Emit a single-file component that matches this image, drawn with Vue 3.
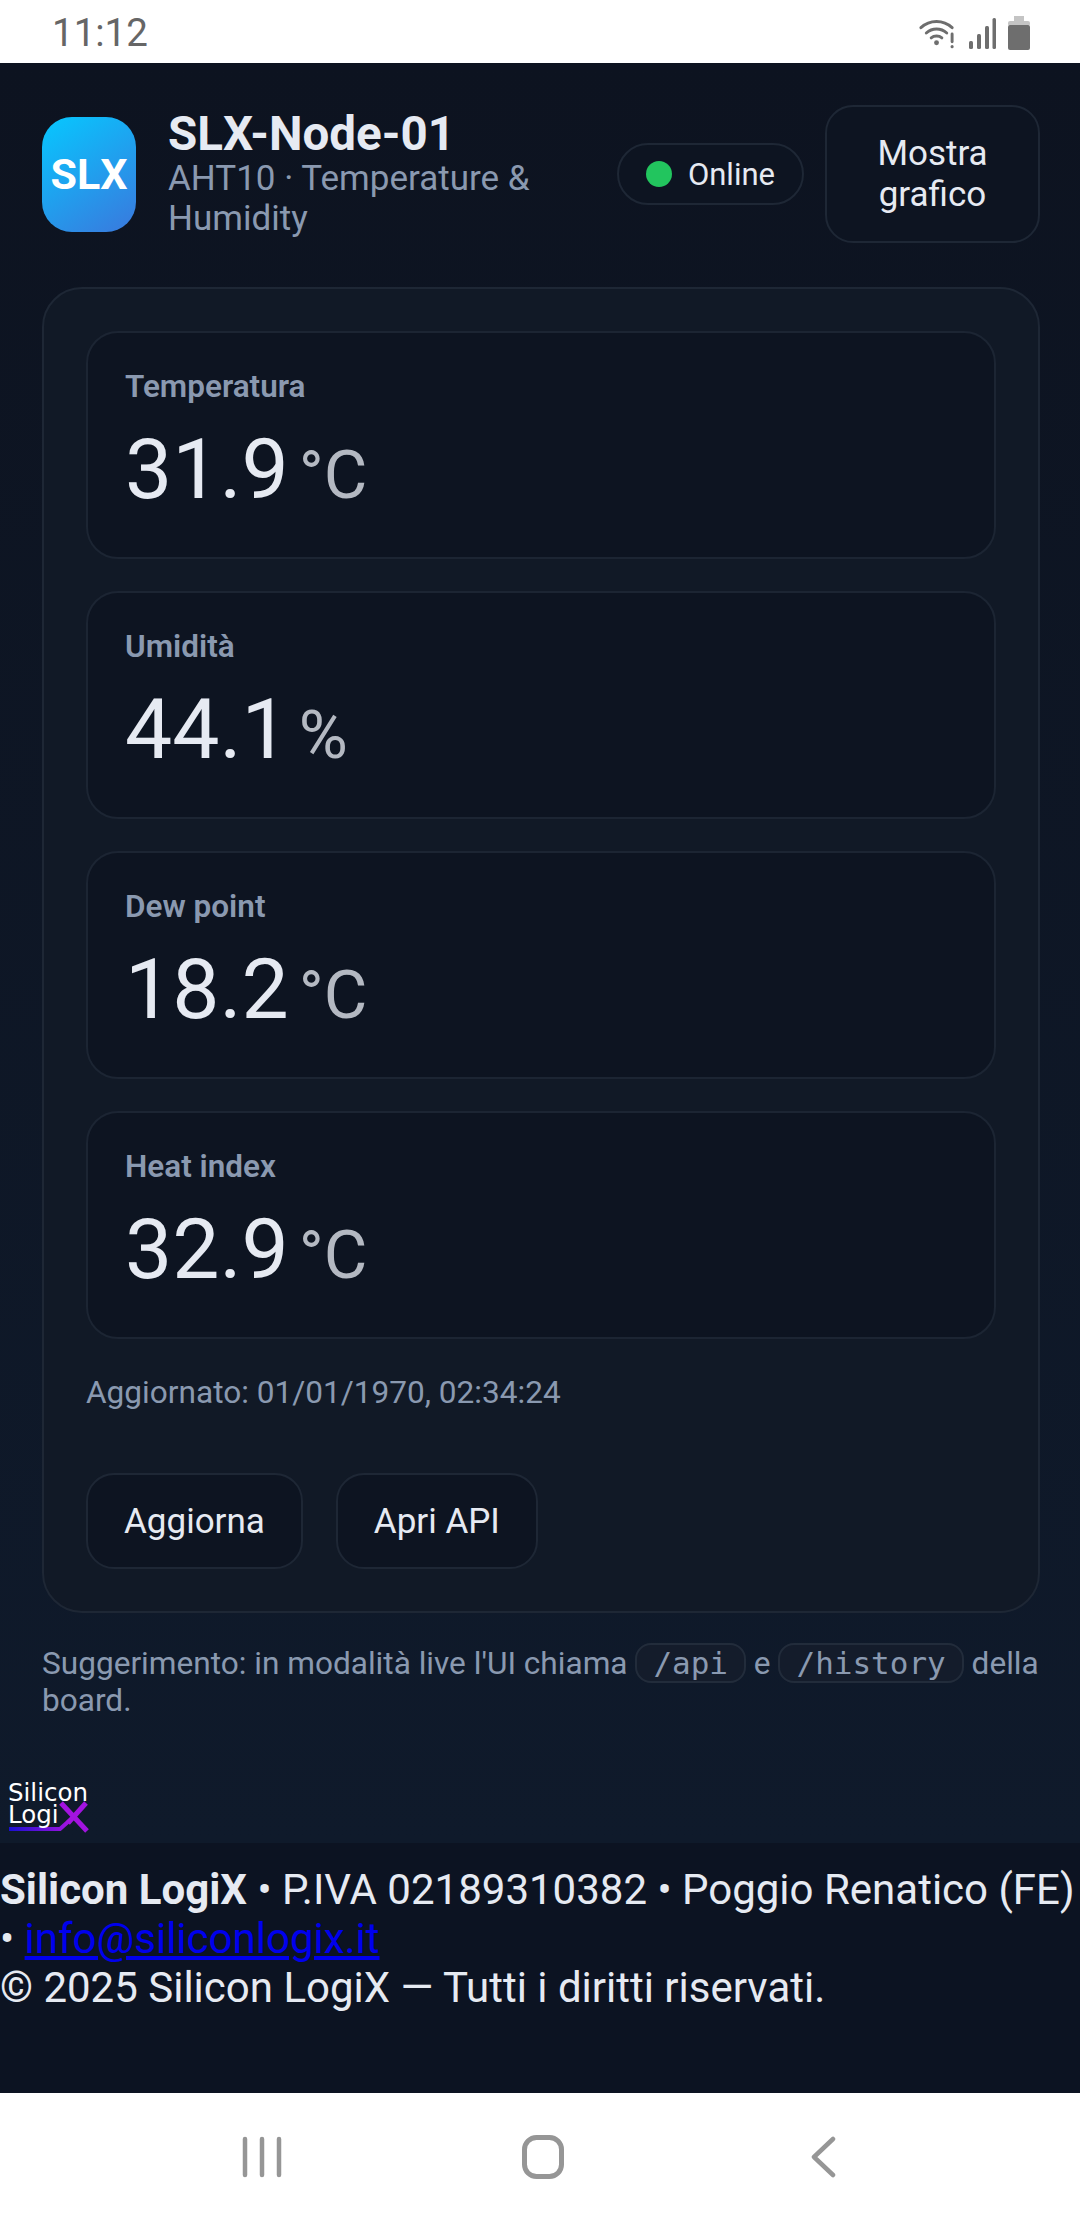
<template>
  <div class="page">
    <div class="status-bar">
      <span class="time">11:12</span>
      <div class="status-icons">
        <svg width="37" height="32" viewBox="0 0 38 32" fill="none" stroke="#6e6e6e" stroke-linecap="round">
          <path d="M2 10.500C11 2 25 2 34 10.500" stroke-width="3" />
          <path d="M7.500 16C13.500 10.500 22.500 10.500 28.500 16" stroke-width="3" />
          <path d="M12.500 21C15.500 18.500 20.500 18.500 23.500 21" stroke-width="3" />
          <circle cx="18" cy="26" r="2.500" fill="#6e6e6e" stroke="none" />
          <path d="M34 17V25" stroke-width="3" />
          <circle cx="34" cy="30" r="1.600" fill="#6e6e6e" stroke="none" />
        </svg>
        <svg width="28" height="32" viewBox="0 0 28 32" fill="#6e6e6e">
          <rect x="1" y="24" width="4" height="8" rx="1.500" />
          <rect x="9" y="17" width="4" height="15" rx="1.500" />
          <rect x="17" y="9" width="4" height="23" rx="1.500" />
          <rect x="24.500" y="1" width="3.500" height="31" rx="1.500" />
        </svg>
        <svg width="22" height="34" viewBox="0 0 22 34">
          <rect x="6" y="0" width="10" height="6" fill="#c4c4c4" />
          <rect x="0" y="5" width="22" height="5" rx="2" fill="#c4c4c4" />
          <rect x="0" y="9" width="22" height="25" rx="2" fill="#6e6e6e" />
        </svg>
      </div>
    </div>

    <main class="main">
      <header class="header">
        <div class="logo">SLX</div>
        <div class="title-block">
          <h1>SLX-Node-01</h1>
          <p>AHT10 · Temperature &amp; Humidity</p>
        </div>
        <div class="pill"><span class="dot"></span>Online</div>
        <button class="btn chart-btn">Mostra grafico</button>
      </header>

      <section class="panel">
        <div class="cards">
          <div v-for="m in metrics" :key="m.label" class="card">
            <div class="label">{{ m.label }}</div>
            <div class="value">{{ m.value }}<span class="unit">{{ m.unit }}</span></div>
          </div>
        </div>
        <div class="updated">Aggiornato: 01/01/1970, 02:34:24</div>
        <div class="actions">
          <button class="btn">Aggiorna</button>
          <button class="btn">Apri API</button>
        </div>
      </section>

      <p class="hint">
        Suggerimento: in modalità live l'UI chiama <code>/api</code> e <code>/history</code> della board.
      </p>

      <svg class="brand" width="82" height="56" viewBox="0 0 82 56">
        <defs>
          <linearGradient id="brandLine" gradientUnits="userSpaceOnUse" x1="1" y1="0" x2="62" y2="0">
            <stop offset="0" stop-color="#1a0fd0" />
            <stop offset="1" stop-color="#a313e0" />
          </linearGradient>
        </defs>
        <path d="M1 50H52L62 41" fill="none" stroke="url(#brandLine)" stroke-width="4" />
        <path d="M53 24L79 52M78 24L60 44" fill="none" stroke="#a313e0" stroke-width="5" />
        <text x="0" y="22" class="brand-text">Silicon</text>
        <text x="0" y="44" class="brand-text">Logi</text>
      </svg>
    </main>

    <footer class="footer">
      <strong>Silicon LogiX</strong> • P.IVA 02189310382 • Poggio Renatico (FE) • <a href="#">info@siliconlogix.it</a><br />
      © 2025 Silicon LogiX — Tutti i diritti riservati.
    </footer>

    <nav class="nav-bar">
      <svg width="40" height="42" viewBox="0 0 40 42" stroke="#969696" stroke-width="4.500" stroke-linecap="round">
        <path d="M3 3V39M20 3V39M37 3V39" />
      </svg>
      <svg class="home" width="42" height="44" viewBox="0 0 42 44" fill="none" stroke="#969696" stroke-width="5">
        <rect x="2.500" y="2.500" width="37" height="39" rx="12" />
      </svg>
      <svg width="28" height="42" viewBox="0 0 28 42" fill="none" stroke="#969696" stroke-width="4.500" stroke-linecap="round" stroke-linejoin="round">
        <path d="M24 3L5 21L24 39" />
      </svg>
    </nav>
  </div>
</template>

<script setup>
const metrics = [
  { label: 'Temperatura', value: '31.9', unit: '°C' },
  { label: 'Umidità', value: '44.1', unit: '%' },
  { label: 'Dew point', value: '18.2', unit: '°C' },
  { label: 'Heat index', value: '32.9', unit: '°C' }
]
</script>

<style>
body {
  margin: 0;
  background: #0b1120;
}
</style>

<style scoped>
.page {
  width: 1080px;
  height: 2220px;
  display: flex;
  flex-direction: column;
  font-family: Roboto, "Liberation Sans", sans-serif;
  color: #e6eaf2;
  overflow: hidden;
}

.status-bar {
  height: 63px;
  flex-shrink: 0;
  background: #fff;
  display: flex;
  align-items: center;
  justify-content: space-between;
  padding: 2px 50px 0 52px;
  box-sizing: border-box;
}

.time {
  font-size: 38.500px;
  color: #666;
}

.status-icons {
  display: flex;
  align-items: center;
  gap: 12px;
}

.main {
  flex: 1;
  min-height: 0;
  padding: 42px 40px 0 42px;
  display: flex;
  flex-direction: column;
  background: linear-gradient(180deg, #0d1320 0%, #0f1a2b 100%);
}

.header {
  display: flex;
  align-items: center;
  height: 138px;
  flex-shrink: 0;
}

.logo {
  width: 94px;
  height: 115px;
  flex-shrink: 0;
  margin-right: 32px;
  border-radius: 30px;
  background: linear-gradient(145deg, #06c8ff, #3a78dd);
  color: #fff;
  font-weight: 700;
  font-size: 43px;
  display: flex;
  align-items: center;
  justify-content: center;
}

.title-block {
  flex: 1;
  min-width: 0;
}

.title-block h1 {
  margin: 0;
  font-size: 47.500px;
  font-weight: 700;
  line-height: 50px;
  color: #e6eaf2;
}

.title-block p {
  margin: 0;
  font-size: 35px;
  line-height: 40.500px;
  color: #8a99b0;
}

.pill {
  display: flex;
  align-items: center;
  gap: 16px;
  height: 62px;
  box-sizing: border-box;
  padding: 0 27px;
  margin-right: 21px;
  border: 2px solid #1e2735;
  border-radius: 31px;
  font-size: 31px;
  background: #0d1421;
  flex-shrink: 0;
}

.dot {
  width: 26px;
  height: 26px;
  border-radius: 50%;
  background: #22c55e;
}

.btn {
  font-family: inherit;
  font-size: 35px;
  line-height: 41px;
  color: #e6eaf2;
  background: #0d1421;
  border: 2px solid #1e2735;
  border-radius: 28px;
  padding: 0 36px;
  height: 96px;
  box-sizing: border-box;
}

.chart-btn {
  width: 215px;
  height: 138px;
  flex-shrink: 0;
  padding: 0 20px;
}

.panel {
  margin-top: 44px;
  flex-shrink: 0;
  box-sizing: border-box;
  padding: 42px;
  border: 2px solid #1e2735;
  border-radius: 40px;
  background: #111926;
}

.cards {
  display: flex;
  flex-direction: column;
  gap: 32px;
}

.card {
  height: 228px;
  box-sizing: border-box;
  padding: 36px 37px;
  border: 2px solid #1c2533;
  border-radius: 32px;
  background: #0d1421;
}

.label {
  font-size: 31.500px;
  font-weight: 600;
  line-height: 36px;
  color: #8a99b0;
}

.value {
  margin-top: 15px;
  font-size: 84px;
  line-height: 100px;
  color: #e6eaf2;
}

.unit {
  margin-left: 10px;
  font-size: 67px;
  color: #b4b9c2;
}

.updated {
  margin-top: 34px;
  font-size: 31.600px;
  line-height: 40px;
  color: #8a99b0;
}

.actions {
  margin-top: 60px;
  display: flex;
  gap: 33px;
}

.hint {
  margin: 32px 0 0;
  font-size: 31.600px;
  line-height: 37px;
  color: #8a99b0;
}

.hint code {
  font-family: "DejaVu Sans Mono", monospace;
  font-size: 31px;
  padding: 0 16px;
  background: #141c2b;
  border: 2px solid #222c3b;
  border-radius: 16px;
}

.brand {
  margin: 60px 0 0 -34px;
  flex-shrink: 0;
  display: block;
}

.brand-text {
  font-family: "DejaVu Sans", sans-serif;
  font-size: 24.500px;
  fill: #fff;
}

.footer {
  height: 250px;
  box-sizing: border-box;
  padding-top: 22px;
  flex-shrink: 0;
  background: #0c1322;
  font-size: 42px;
  line-height: 49px;
  color: #e6eaf2;
}

.footer a {
  color: #0000ee;
}

.nav-bar {
  height: 127px;
  flex-shrink: 0;
  background: #fff;
  display: flex;
  align-items: center;
  justify-content: space-between;
  padding: 0 243px 0 242px;
  box-sizing: border-box;
}

.home {
  margin-right: 5px;
}
</style>
